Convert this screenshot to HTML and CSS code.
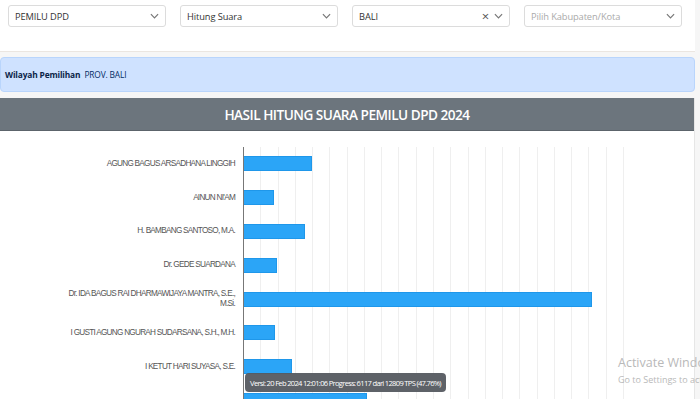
FILE: index.html
```html
<!DOCTYPE html>
<html lang="en">
<head>
  <meta charset="UTF-8">
  <meta name="viewport" content="width=device-width, initial-scale=1.0">
  <title>Hasil Hitung Suara Pemilu DPD 2024</title>
  <link rel="stylesheet" href="styles.css">
</head>
<body>

  <div class="page">
    <!-- Filter selects -->
    <div class="filters">
      <div class="select">
        <span class="value">PEMILU DPD</span>
        <svg class="chev" viewBox="0 0 10 6"><polyline points="1,1 5,5 9,1"/></svg>
      </div>
      <div class="select">
        <span class="value">Hitung Suara</span>
        <svg class="chev" viewBox="0 0 10 6"><polyline points="1,1 5,5 9,1"/></svg>
      </div>
      <div class="select">
        <span class="value">BALI</span>
        <span class="clear">&times;</span>
        <svg class="chev" viewBox="0 0 10 6"><polyline points="1,1 5,5 9,1"/></svg>
      </div>
      <div class="select">
        <span class="value placeholder">Pilih Kabupaten/Kota</span>
        <svg class="chev" viewBox="0 0 10 6"><polyline points="1,1 5,5 9,1"/></svg>
      </div>
    </div>

    <div class="info">
      <b>Wilayah Pemilihan</b> PROV. BALI
    </div>

    <div class="card">
      <div class="card-header">HASIL HITUNG SUARA PEMILU DPD 2024</div>
      <div class="chart">
        <div class="row">
          <div class="label">AGUNG BAGUS ARSADHANA LINGGIH</div>
          <div class="plot"><div class="bar" style="width:68px"></div></div>
        </div>
        <div class="row">
          <div class="label">AINUN NI'AM</div>
          <div class="plot"><div class="bar" style="width:30px"></div></div>
        </div>
        <div class="row">
          <div class="label">H. BAMBANG SANTOSO, M.A.</div>
          <div class="plot"><div class="bar" style="width:61px"></div></div>
        </div>
        <div class="row">
          <div class="label">Dr. GEDE SUARDANA</div>
          <div class="plot"><div class="bar" style="width:33px"></div></div>
        </div>
        <div class="row">
          <div class="label">Dr. IDA BAGUS RAI DHARMAWIJAYA MANTRA, S.E.,<br>M.Si.</div>
          <div class="plot"><div class="bar" style="width:348px"></div></div>
        </div>
        <div class="row">
          <div class="label">I GUSTI AGUNG NGURAH SUDARSANA, S.H., M.H.</div>
          <div class="plot"><div class="bar" style="width:31px"></div></div>
        </div>
        <div class="row">
          <div class="label">I KETUT HARI SUYASA, S.E.</div>
          <div class="plot"><div class="bar" style="width:48px"></div></div>
        </div>
        <div class="row">
          <div class="label"></div>
          <div class="plot"><div class="bar" style="width:123px"></div></div>
        </div>

        <div class="tooltip">Versi: 20 Feb 2024 12:01:06 Progress: 6117 dari 12809 TPS (47.76%)</div>
      </div>
    </div>
  </div>

  <div class="watermark">
    <div class="wm-title">Activate Windows</div>
    <div class="wm-sub">Go to Settings to activate Windows.</div>
  </div>

</body>
</html>
```

FILE: styles.css
```css
/* Basic styling */
body {
  margin: 0;
  font-family: "Open Sans", sans-serif;
  background-color: #f6f6f6;
  overflow: hidden;
}

.page {
  width: 695px;
}

/* Filter bar */
.filters {
  display: flex;
  gap: 14px;
  padding: 5px 8px 0;
  background: #fff;
  border-bottom: 1px solid #ebe6e1;
  box-sizing: border-box;
  height: 52px;
}

.select {
  width: 158px;
  height: 22px;
  display: flex;
  align-items: center;
  border: 1px solid #dcdcdc;
  border-radius: 3px;
  padding: 0 6px;
  box-sizing: border-box;
  font-size: 9.3px;
  letter-spacing: -0.1px;
  color: #333;
}

.select .value {
  flex: 1;
}

.select .placeholder {
  color: #aaa;
}

.select .clear {
  font-size: 13px;
  color: #555;
  margin-right: 5px;
  line-height: 1;
}

.chev {
  width: 9px;
  height: 6px;
  fill: none;
  stroke: #777;
  stroke-width: 1.3;
}

/* Info alert */
.info {
  margin-top: 5px;
  height: 35px;
  display: flex;
  align-items: center;
  gap: 4px;
  padding-left: 4px;
  background: #cfe2ff;
  border: 1px solid #b9d5fc;
  border-radius: 4px;
  box-sizing: border-box;
  font-size: 8.4px;
  letter-spacing: -0.15px;
  color: #052c65;
}

.info b {
  color: #0b2447;
}

/* Result card */
.card {
  margin-top: 6px;
  background: #fff;
  border-right: 1px solid #e6e6e6;
}

.card-header {
  height: 32px;
  display: flex;
  align-items: center;
  justify-content: center;
  background: #6c757d;
  border-bottom: 1px solid #5c646b;
  color: #fff;
  font-size: 13.6px;
  font-weight: 600;
  letter-spacing: -0.5px;
}

.chart {
  position: relative;
  padding-top: 16px;
  height: 260px;
}

.row {
  display: flex;
  height: 33.8px;
}

.label {
  width: 235px;
  padding-right: 8px;
  display: flex;
  align-items: center;
  justify-content: flex-end;
  text-align: right;
  font-family: "Liberation Sans", sans-serif;
  font-size: 8.2px;
  letter-spacing: -0.72px;
  line-height: 10px;
  color: #555;
}

.plot {
  width: 380px;
  display: flex;
  align-items: center;
  border-left: 1px solid #777;
  background-image: repeating-linear-gradient(to right, transparent 0 16.27px, #efefef 16.27px 17.27px);
}

.bar {
  height: 15px;
  background: #2ba5f7;
  border: 1px solid #1f97ea;
  box-sizing: border-box;
  border-left: none;
}

/* Chart tooltip */
.tooltip {
  position: absolute;
  left: 245px;
  top: 242px;
  width: 201px;
  height: 19px;
  display: flex;
  align-items: center;
  justify-content: center;
  background: rgba(85, 90, 96, 0.95);
  border-radius: 4px;
  color: #fff;
  font-size: 7.6px;
  letter-spacing: -0.7px;
  white-space: nowrap;
}

/* Windows activation watermark */
.watermark {
  position: absolute;
  left: 618px;
  top: 354px;
  white-space: nowrap;
  color: #b9b9b9;
}

.wm-title {
  font-size: 12.5px;
}

.wm-sub {
  font-size: 9px;
  margin-top: 2px;
}
```
